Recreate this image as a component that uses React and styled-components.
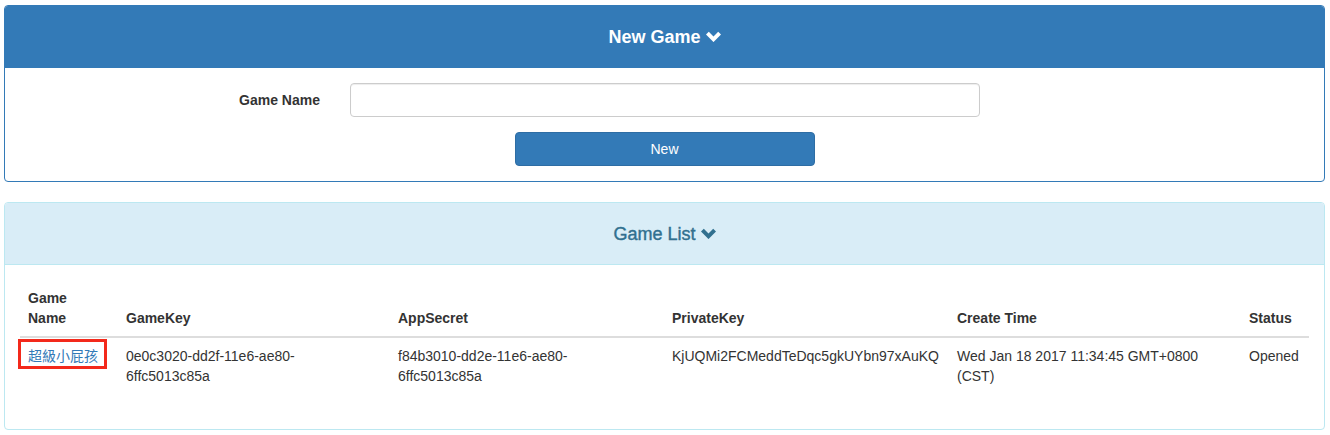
import styled, { createGlobalStyle } from 'styled-components'

const GlobalStyle = createGlobalStyle`
  body {
    margin: 0;
    background: #fff;
    font-family: "Liberation Sans", Arial, "Noto Sans CJK TC", sans-serif;
    font-size: 14px;
    line-height: 20px;
    color: #333;
  }
  * { box-sizing: border-box; }
`

const Page = styled.div`
  padding: 5px 5px 0 4px;
`

const Panel = styled.section`
  border: 1px solid ${p => p.$border};
  border-radius: 4px;
  margin-bottom: 20px;
  background: #fff;
  overflow: hidden;
`

const Heading = styled.div`
  background: ${p => p.$bg};
  color: ${p => p.$color};
  border-bottom: 1px solid ${p => p.$border};
  height: 62px;
  display: flex;
  align-items: center;
  justify-content: center;
  gap: 5px;
  font-size: 18px;
  font-weight: ${p => p.$weight};
  -webkit-text-stroke: ${p => p.$stroke || 0} ${p => p.$color};
`

const Body = styled.div`
  padding: 15px;
`

const FormRow = styled.div`
  display: grid;
  grid-template-columns: 330px 660px;
  margin: 0 -15px;
  align-items: center;
`

const Label = styled.label`
  font-weight: bold;
  text-align: right;
  padding-right: 15px;
`

const InputCell = styled.div`
  padding: 0 15px;
`

const Input = styled.input`
  display: block;
  width: 100%;
  height: 34px;
  border: 1px solid #ccc;
  border-radius: 4px;
  box-shadow: inset 0 1px 1px rgba(0, 0, 0, 0.075);
  font: inherit;
  padding: 6px 12px;
`

const ButtonRow = styled.div`
  display: flex;
  justify-content: center;
  margin-top: 15px;
`

const Button = styled.button`
  width: 300px;
  height: 34px;
  background: #337ab7;
  border: 1px solid #2e6da4;
  border-radius: 4px;
  color: #fff;
  font: inherit;
  cursor: pointer;
`

const Table = styled.table`
  width: 100%;
  table-layout: fixed;
  border-collapse: collapse;
  margin-bottom: 20px;

  th, td {
    padding: 8px;
    text-align: left;
    vertical-align: top;
  }
  th {
    vertical-align: bottom;
    border-bottom: 2px solid #ddd;
    font-weight: bold;
  }
`

const NameLink = styled.a`
  display: inline-block;
  color: #337ab7;
  text-decoration: none;
  border: 3px solid #f3291b;
  padding: 4px 6px 0 7px;
  margin: -7px 0 -3px -10px;
  font-family: "Liberation Sans", "Noto Sans CJK TC", sans-serif;
`

const Chevron = ({ color }) => (
  <svg width="15" height="11" viewBox="0 0 14 10">
    <polygon points="0,3.2 2.6,0.6 7,5 11.4,0.6 14,3.2 7,10.2" fill={color} />
  </svg>
)

const columns = [
  { label: ['Game', 'Name'], width: 98 },
  { label: ['GameKey'], width: 272 },
  { label: ['AppSecret'], width: 274 },
  { label: ['PrivateKey'], width: 285 },
  { label: ['Create Time'], width: 292 },
  { label: ['Status'], width: 68 },
]

const games = [
  {
    name: '超級小屁孩',
    key: '0e0c3020-dd2f-11e6-ae80-6ffc5013c85a',
    secret: 'f84b3010-dd2e-11e6-ae80-6ffc5013c85a',
    privateKey: 'KjUQMi2FCMeddTeDqc5gkUYbn97xAuKQ',
    created: 'Wed Jan 18 2017 11:34:45 GMT+0800 (CST)',
    status: 'Opened',
  },
]

const App = () => {
  return (
    <Page>
      <GlobalStyle />
      <Panel $border="#337ab7">
        <Heading $bg="#337ab7" $color="#fff" $border="#337ab7" $weight="bold">
          New Game <Chevron color="#fff" />
        </Heading>
        <Body>
          <FormRow>
            <Label>Game Name</Label>
            <InputCell><Input type="text" /></InputCell>
          </FormRow>
          <ButtonRow>
            <Button>New</Button>
          </ButtonRow>
        </Body>
      </Panel>

      <Panel $border="#bce8f1">
        <Heading $bg="#d9edf7" $color="#31708f" $border="#bce8f1" $weight="normal" $stroke="0.4px">
          Game List <Chevron color="#31708f" />
        </Heading>
        <Body>
          <Table>
            <colgroup>
              {columns.map(c => <col key={c.label[0]} style={{ width: c.width }} />)}
            </colgroup>
            <thead>
              <tr>
                {columns.map(c => (
                  <th key={c.label[0]}>
                    {c.label.map((part, i) => <span key={part}>{i > 0 && <br />}{part}</span>)}
                  </th>
                ))}
              </tr>
            </thead>
            <tbody>
              {games.map(g => (
                <tr key={g.key}>
                  <td><NameLink href="#">{g.name}</NameLink></td>
                  <td>{g.key.slice(0, 24)}<br />{g.key.slice(24)}</td>
                  <td>{g.secret.slice(0, 24)}<br />{g.secret.slice(24)}</td>
                  <td>{g.privateKey}</td>
                  <td>{g.created}</td>
                  <td>{g.status}</td>
                </tr>
              ))}
            </tbody>
          </Table>
        </Body>
      </Panel>
    </Page>
  )
}

export default App
